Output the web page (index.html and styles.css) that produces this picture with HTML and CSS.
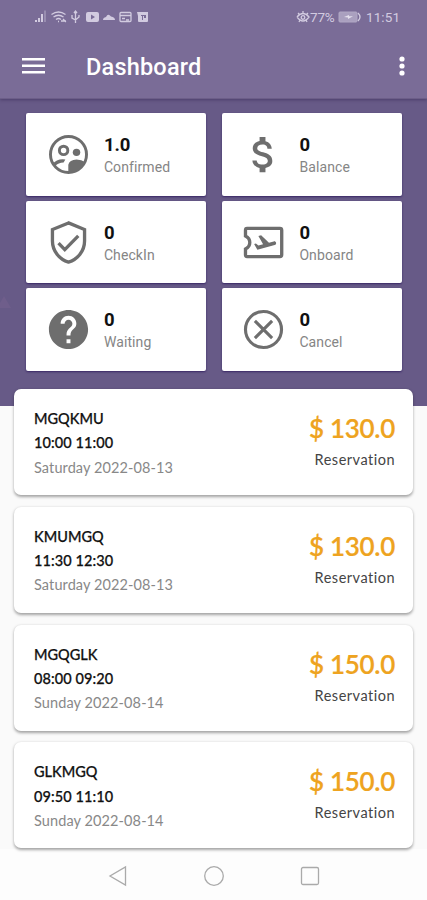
FILE: index.html
```html
<!DOCTYPE html>
<html lang="en">
<head>
<meta charset="utf-8">
<title>Dashboard</title>
<link rel="stylesheet" href="styles.css">
</head>
<body>
<header class="top">
  <div class="status">
    <svg class="status-icons" width="118" height="16" viewBox="0 0 118 16">
      <g fill="#d2cbe0">
        <path d="M1 13h2v-2H1zM4 13h2V9H4zM7 13h2V5H7z"/><path opacity=".35" d="M10 13h2V1.500h-2z"/>
        <path fill-rule="evenodd" d="M54 3h9q2 0 2 2v6q0 2-2 2h-9q-2 0-2-2V5q0-2 2-2zm3 2.500v5l4-2.500z"/>
        <path d="M69 11q0-2.500 3-3 2-4 5-.5 4 .5 4 3.500z"/>
        <path fill-rule="evenodd" d="M103 3h11v9q0 1-1 1h-8q-1 0-1-1V7zm4 3v1h1v4h1V7h1v2h2V6z"/>
      </g>
      <g fill="none" stroke="#d2cbe0" stroke-width="1.300">
        <path d="M17.500 5.500q7-5 14 0M19.500 8q5-3.500 10 0M22 10.500q2.500-2 5 0M24 12.500h1M27 12h5M29 10l3 3"/>
        <path d="M41.500 2v12M38 6v3l3.500 2 3.500-3V6M40 4l1.500-2L43 4"/>
        <rect x="86" y="3.500" width="11" height="9" rx="1"/><path d="M86 6.500h11M88 9.500h3M92 11h3"/>
      </g>
    </svg>
    <div class="status-right">
      <svg width="14" height="14" viewBox="0 0 14 14" fill="none" stroke="#d2cbe0" stroke-width="1.300"><path d="M1 7q6-7 12 0-6 8-12 0M2 3l2 2M7 1v3M12 3l-2 2M3 12l1-2M11 12l-1-2"/><circle cx="7" cy="7.500" r="1.800"/></svg>
      <span class="pct">77%</span>
      <svg class="battery" width="24" height="12" viewBox="0 0 24 12"><rect x="1" y="1" width="18" height="10" rx="1" fill="#aaa0bf" stroke="#b0a7c4"/><path d="M6 6l5-2v1.300h4L10 8V6.600z" fill="#e4dfed"/><path d="M20 2q4 4 0 8" fill="none" stroke="#d2cbe0" stroke-width="1.300"/></svg>
      <span class="time">11:51</span>
    </div>
  </div>
  <div class="bar">
    <svg class="menu" width="23" height="18" viewBox="0 0 23 18" fill="#fff"><path d="M0 1h23v2.600H0zM0 7.500h23v2.600H0zM0 14h23v2.600H0z"/></svg>
    <h1>Dashboard</h1>
    <svg class="more" width="8" height="22" viewBox="0 0 8 22" fill="#fff"><circle cx="4" cy="4" r="2.600"/><circle cx="4" cy="11" r="2.600"/><circle cx="4" cy="18" r="2.600"/></svg>
  </div>
</header>
<main>
  <section class="tiles">
    <div class="tile">
      <svg class="ico" viewBox="0 0 24 24"><circle cx="12" cy="12" r="9.200" fill="none" stroke="#6e6e6e" stroke-width="1.500"/><circle cx="9.500" cy="9.900" r="2.150" fill="none" stroke="#6e6e6e" stroke-width="1.500"/><circle cx="16.100" cy="10.900" r="1.900"/><path d="M3.800 16.800Q6.200 13.900 10.400 14.500L9.500 16.100Q6.800 16.100 5.200 18zM11.900 21.500v-4.300q.6-2.500 4.200-2.700 2.600 0 4.500 1.500-2.400 5-8.700 5.500z"/></svg>
      <div><b>1.0</b><span>Confirmed</span></div>
    </div>
    <div class="tile">
      <svg class="ico" viewBox="0 0 24 24"><path d="M11.800 10.900c-2.270-.59-3-1.200-3-2.150 0-1.090 1.010-1.850 2.700-1.850 1.780 0 2.440.85 2.500 2.100h2.210c-.07-1.720-1.120-3.300-3.210-3.810V3h-3v2.160c-1.940.42-3.500 1.680-3.500 3.610 0 2.310 1.910 3.460 4.700 4.130 2.500.6 3 1.480 3 2.410 0 .69-.49 1.790-2.700 1.790-2.060 0-2.870-.92-2.980-2.100h-2.200c.12 2.190 1.760 3.420 3.680 3.830V21h3v-2.150c1.950-.37 3.500-1.500 3.500-3.550 0-2.840-2.430-3.810-4.700-4.400z"/></svg>
      <div><b>0</b><span>Balance</span></div>
    </div>
    <div class="tile">
      <svg class="ico" viewBox="0 0 24 24"><path d="M12 2L3.800 5.400v5.800c0 5 3.500 9.500 8.200 10.800 4.700-1.300 8.200-5.800 8.200-10.800V5.400z" fill="none" stroke="#6e6e6e" stroke-width="1.700"/><path d="M6.900 12.300l3.200 3.300 6.900-7" fill="none" stroke="#6e6e6e" stroke-width="1.700"/></svg>
      <div><b>0</b><span>CheckIn</span></div>
    </div>
    <div class="tile">
      <svg class="ico" viewBox="0 0 24 24"><path d="M4 4.800h16.400q.9 0 .9.900v12.600q0 .9-.9.900H3.600q-.8 0-.8-.9v-3q2.200-1.100 2.200-3.300T2.800 8.700v-3q0-.9.800-.9z" fill="none" stroke="#6e6e6e" stroke-width="1.700"/><path d="M17.730 13.300l-8.860 2.360-1.660-2.880.93-.25 1.260.99 2.390-.64-2.400-4.160 1.400-.38 4.010 3.740 2.440-.65c.51-.14 1.040.17 1.180.68.130.51-.170 1.040-.69 1.190z"/></svg>
      <div><b>0</b><span>Onboard</span></div>
    </div>
    <div class="tile">
      <svg class="ico" viewBox="0 0 24 24"><path d="M12 2C6.480 2 2 6.480 2 12s4.480 10 10 10 10-4.480 10-10S17.520 2 12 2zm1 17h-2v-2h2v2zm2.070-7.750l-.9.920C13.450 12.900 13 13.500 13 15h-2v-.5c0-1.100.45-2.100 1.170-2.830l1.240-1.260c.37-.36.59-.86.59-1.410 0-1.100-.9-2-2-2s-2 .9-2 2H8c0-2.210 1.790-4 4-4s4 1.790 4 4c0 .88-.36 1.680-.93 2.250z"/></svg>
      <div><b>0</b><span>Waiting</span></div>
    </div>
    <div class="tile">
      <svg class="ico" viewBox="0 0 24 24"><g fill="none" stroke="#6e6e6e" stroke-width="1.600"><circle cx="12" cy="12" r="9.200"/><path d="M7.600 7.600l8.800 8.800M16.400 7.600l-8.800 8.800"/></g></svg>
      <div><b>0</b><span>Cancel</span></div>
    </div>
  </section>
  <section class="list">
    <article class="card">
      <div class="flight"><b>MGQKMU</b><b class="hours">10:00 11:00</b><span>Saturday 2022-08-13</span></div>
      <div class="price"><strong>$ 130.0</strong><span>Reservation</span></div>
    </article>
    <article class="card">
      <div class="flight"><b>KMUMGQ</b><b class="hours">11:30 12:30</b><span>Saturday 2022-08-13</span></div>
      <div class="price"><strong>$ 130.0</strong><span>Reservation</span></div>
    </article>
    <article class="card">
      <div class="flight"><b>MGQGLK</b><b class="hours">08:00 09:20</b><span>Sunday 2022-08-14</span></div>
      <div class="price"><strong>$ 150.0</strong><span>Reservation</span></div>
    </article>
    <article class="card">
      <div class="flight"><b>GLKMGQ</b><b class="hours">09:50 11:10</b><span>Sunday 2022-08-14</span></div>
      <div class="price"><strong>$ 150.0</strong><span>Reservation</span></div>
    </article>
  </section>
  <svg class="mark" width="14" height="15" viewBox="0 0 14 15"><path d="M0 14V9l4-7 7 12z"/></svg>
</main>
<nav class="nav">
  <svg width="20" height="22" viewBox="0 0 20 22"><path d="M17.500 2v18L2 11z"/></svg>
  <svg width="22" height="22" viewBox="0 0 22 22"><circle cx="11" cy="11" r="9.300"/></svg>
  <svg width="20" height="20" viewBox="0 0 20 20"><rect x="1.500" y="1.500" width="17" height="17" rx="1.500"/></svg>
</nav>
</body>
</html>
```
FILE: styles.css
```css
* { box-sizing: border-box; }
body {
  margin: 0;
  height: 900px;
  overflow: hidden;
  font-family: Roboto, sans-serif;
  background: #fdfdfd;
  display: flex;
  flex-direction: column;
}
svg { display: block; flex: none; }
.top {
  height: 99px;
  flex: none;
  background: #7a6c97;
  border-bottom: 1px solid #6c5e88;
  z-index: 1;
  box-shadow: 0 1px 3px rgba(50, 35, 80, .5);
}
.status {
  height: 34px;
  padding: 0 25px 0 34px;
  display: flex;
  align-items: center;
  justify-content: space-between;
  color: #d2cbe0;
  font-size: 13.5px;
}
.status-right { display: flex; align-items: center; }
.pct { width: 27px; letter-spacing: -.2px; }
.battery { margin-left: 1px; }
.time { margin-left: 4px; width: 36px; letter-spacing: .1px; }
.bar {
  height: 64px;
  padding: 0 21px 0 22px;
  display: flex;
  align-items: center;
}
h1 {
  margin: 2px 0 0 41px;
  font-size: 23.5px;
  line-height: 28px;
  font-weight: 500;
  letter-spacing: .2px;
  color: #fff;
  flex: 1;
}
main {
  position: relative;
  flex: 1;
  padding: 14px 14px 0;
  background: linear-gradient(#675a87 307px, #fafafa 307px);
}
.mark {
  position: absolute;
  left: 0;
  top: 195px;
  fill: #75628f;
  opacity: .6;
}
.tiles {
  display: grid;
  grid-template-columns: 180px 180px;
  grid-auto-rows: 82.700px;
  gap: 5px 15.500px;
  padding-left: 12.400px;
}
.tile {
  background: #fff;
  border-radius: 2px;
  display: flex;
  align-items: center;
  padding-left: 18.500px;
  box-shadow: 0 1px 2px rgba(40, 22, 90, .75);
}
.ico { width: 47px; height: 47px; fill: #6e6e6e; margin-right: 12px; }
.tile div { display: flex; flex-direction: column; padding-top: 3px; }
.tile b { font-size: 18.500px; line-height: 22px; color: #111; font-weight: 700; }
.tile span { font-size: 14px; line-height: 22px; color: #858585; letter-spacing: .1px; }
.list { margin-top: 18px; display: grid; gap: 11.800px; }
.card {
  height: 106px;
  background: #fff;
  border-radius: 7px;
  box-shadow: 0 1.500px 3px rgba(0, 0, 0, .35);
  display: flex;
  justify-content: space-between;
  padding: 18px 18px 0 20px;
  font-family: Lato, sans-serif;
}
.flight { display: flex; flex-direction: column; font-size: 14.500px; line-height: 24.300px; }
.flight b { color: #111; font-weight: 500; -webkit-text-stroke: .25px #111; }
.flight .hours { letter-spacing: .1px; }
.flight span { color: #888; font-size: 14.500px; letter-spacing: .1px; }
.price { display: flex; flex-direction: column; align-items: flex-end; padding-top: 2px; }
.price strong { font: 600 26px/39px Lato, sans-serif; letter-spacing: -.3px; color: #eea320; -webkit-text-stroke: .2px #eea320; }
.price span { font-size: 14.500px; line-height: 24px; color: #444; letter-spacing: .5px; }
.nav {
  height: 51px;
  flex: none;
  display: flex;
  align-items: center;
  justify-content: center;
  gap: 75px;
  padding: 3px 0 0 1px;
}
.nav svg { fill: none; stroke: #aaa; stroke-width: 1.300; }
```
